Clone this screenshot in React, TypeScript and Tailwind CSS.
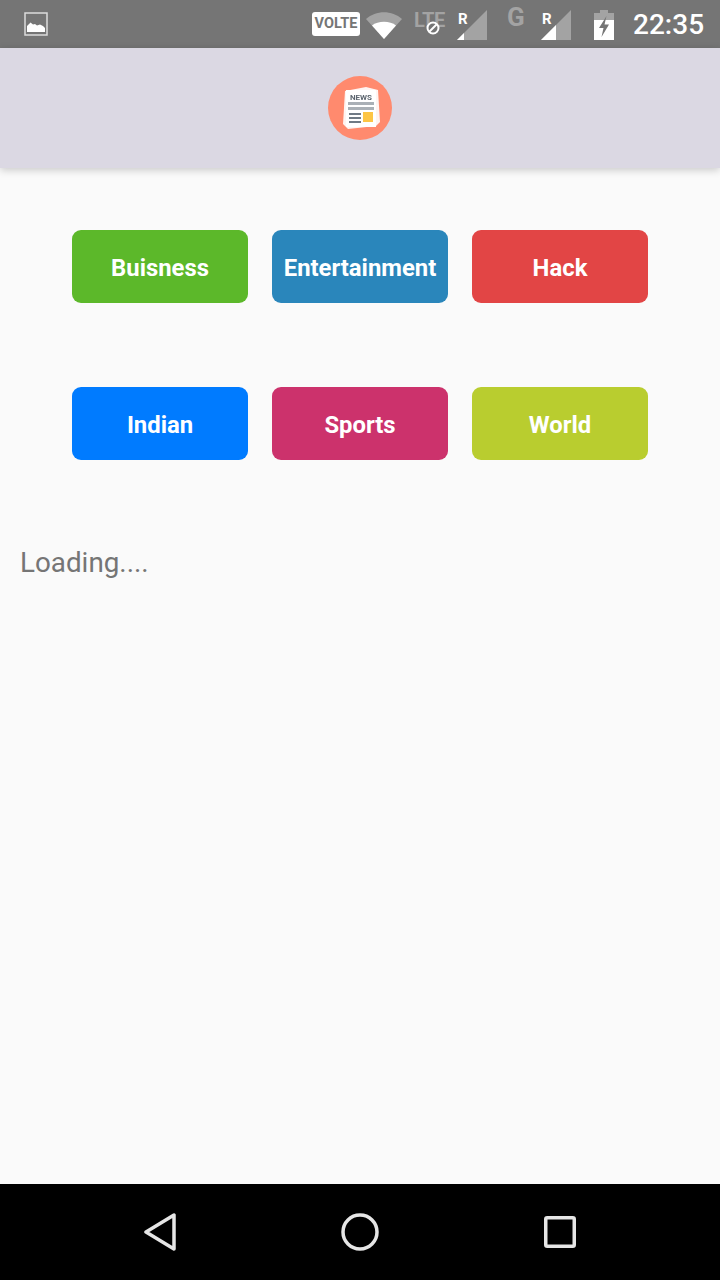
import React from 'react';

type Category = {
  label: string;
  color: string;
};

const rows: Category[][] = [
  [
    { label: 'Buisness', color: 'bg-[#5cb82a]' },
    { label: 'Entertainment', color: 'bg-[#2a86bb]' },
    { label: 'Hack', color: 'bg-[#e24545]' },
  ],
  [
    { label: 'Indian', color: 'bg-[#007bff]' },
    { label: 'Sports', color: 'bg-[#cc326c]' },
    { label: 'World', color: 'bg-[#b9cd2f]' },
  ],
];

function SignalIcon({ filled }: { filled: 'small' | 'half' }) {
  return (
    <div className="relative w-[30px] h-[30px]">
      <svg width="30" height="30" viewBox="0 0 30 30" className="absolute left-0 top-0">
        <path d="M30 0V30H0Z" fill="#a3a3a3" />
        {filled === 'small' ? <path d="M0 30L7 23V30Z" fill="#fff" /> : <path d="M0 30L15 15V30Z" fill="#fff" />}
      </svg>
      <span className="absolute left-[1px] top-[1px] text-[15px] leading-[16px] font-bold text-white">R</span>
    </div>
  );
}

function StatusBar() {
  return (
    <div className="h-12 bg-[#757575] flex items-center pl-6 pr-4 font-['Roboto',sans-serif]">
      <svg width="24" height="24" viewBox="0 0 24 24">
        <rect x="1" y="1" width="22" height="22" fill="none" stroke="#dcdcdc" strokeWidth="1.5" />
        <path d="M3 20V14L6.5 10.5L9 12.5L11 12L13 13.5L16 12.5L19 14L21 16V20Z" fill="#fff" />
      </svg>
      <div className="ml-auto flex items-center">
        <div className="w-12 h-6 rounded-[3px] bg-white text-[#757575] text-[14.5px] leading-6 font-bold text-center">VOLTE</div>
        <svg width="36" height="28" viewBox="0 0 36 28" className="ml-[6px] mt-[1px]">
          <path d="M0 8C10 -1 26 -1 36 8L18 28Z" fill="#a3a3a3" />
          <path d="M6 14.5C12 9.5 24 9.5 30 14.5L18 28Z" fill="#fff" />
        </svg>
        <div className="relative w-[36px] h-6 ml-[12px] -mt-[9px] text-[#a3a3a3] text-[20px] leading-6 font-bold tracking-[-0.5px]">
          LTE
          <svg width="16" height="16" viewBox="0 0 16 16" className="absolute left-[11px] top-[12px]">
            <circle cx="8" cy="8" r="5.5" fill="#757575" stroke="#fff" strokeWidth="2" />
            <path d="M4.5 11.5L11.5 4.5" stroke="#fff" strokeWidth="2" />
          </svg>
        </div>
        <div className="ml-[7px] mt-[2px]">
          <SignalIcon filled="small" />
        </div>
        <div className="ml-[20px] -mt-[14px] w-[20px] text-[#a3a3a3] text-[26px] leading-6 font-bold">G</div>
        <div className="ml-[14px] mt-[2px]">
          <SignalIcon filled="half" />
        </div>
        <svg width="20" height="30" viewBox="0 0 20 30" className="ml-[23px] mt-[1px]">
          <path d="M6 0H14V3H20V10H0V3H6Z" fill="#a3a3a3" />
          <path d="M0 10H20V30H0Z" fill="#fff" />
          <path d="M12.5 6L5 18H9.5L7.5 27L15 14.5H10.5Z" fill="#757575" />
        </svg>
        <div className="ml-[19px] mt-[2px] mr-[1px] text-white text-[28px] leading-8 font-medium w-[70px] whitespace-nowrap">22:35</div>
      </div>
    </div>
  );
}

function NewsLogo() {
  return (
    <svg width="64" height="64" viewBox="0 0 64 64">
      <circle cx="32" cy="32" r="32" fill="#ff8a6e" />
      <g className="blur-[0.6px]">
        <path d="M17 15L38 11L50 14L52 46L48 50L20 53L15 48Z" fill="#ffffff" opacity="0.9" />
        <rect x="18" y="14" width="30" height="37" fill="#ffffff" />
        <text x="33" y="24" textAnchor="middle" fontSize="8" fontWeight="700" fontFamily="Roboto, sans-serif" fill="#5d6670">NEWS</text>
        <rect x="20" y="26" width="26" height="3" fill="#aab0b6" />
        <rect x="20" y="31" width="26" height="3" fill="#aab0b6" />
        <rect x="21" y="37" width="12" height="2" fill="#6f7a85" />
        <rect x="21" y="41" width="12" height="2" fill="#6f7a85" />
        <rect x="21" y="45" width="12" height="2" fill="#6f7a85" />
        <rect x="35" y="36" width="10" height="10" fill="#fdc544" />
      </g>
    </svg>
  );
}

export default function App() {
  return (
    <div className="w-[720px] h-[1280px] flex flex-col bg-[#fafafa] font-['Roboto',sans-serif] overflow-hidden">
      <StatusBar />
      <header className="relative h-[120px] bg-[#dbd8e3] flex items-center justify-center shadow-[0_2px_8px_rgba(0,0,0,0.2)]">
        <NewsLogo />
      </header>
      <main className="flex-1 pt-[62px]">
        <div className="flex flex-col gap-[84px] items-center">
          {rows.map((row, index) => (
            <div key={index} className="flex gap-6">
              {row.map((item) => (
                <button
                  key={item.label}
                  className={`${item.color} w-[176px] h-[73px] pt-[4px] rounded-[9px] text-white text-[23.85px] font-bold whitespace-nowrap flex items-center justify-center`}
                >
                  {item.label}
                </button>
              ))}
            </div>
          ))}
        </div>
        <p className="mt-[87px] ml-5 text-[27.8px] leading-8 text-[#757575]">Loading....</p>
      </main>
      <nav className="h-24 bg-black flex items-center pl-[144px] pr-[144px] justify-between">
        <svg width="32" height="38" viewBox="0 0 32 38">
          <path d="M30 2V36L2 19Z" fill="none" stroke="#e6e6e6" strokeWidth="3.5" strokeLinejoin="round" />
        </svg>
        <svg width="38" height="38" viewBox="0 0 38 38">
          <circle cx="19" cy="19" r="17" fill="none" stroke="#e6e6e6" strokeWidth="3.5" />
        </svg>
        <svg width="32" height="32" viewBox="0 0 32 32">
          <rect x="1.75" y="1.75" width="28.5" height="28.5" rx="1.5" fill="none" stroke="#e6e6e6" strokeWidth="3.5" />
        </svg>
      </nav>
    </div>
  );
}
